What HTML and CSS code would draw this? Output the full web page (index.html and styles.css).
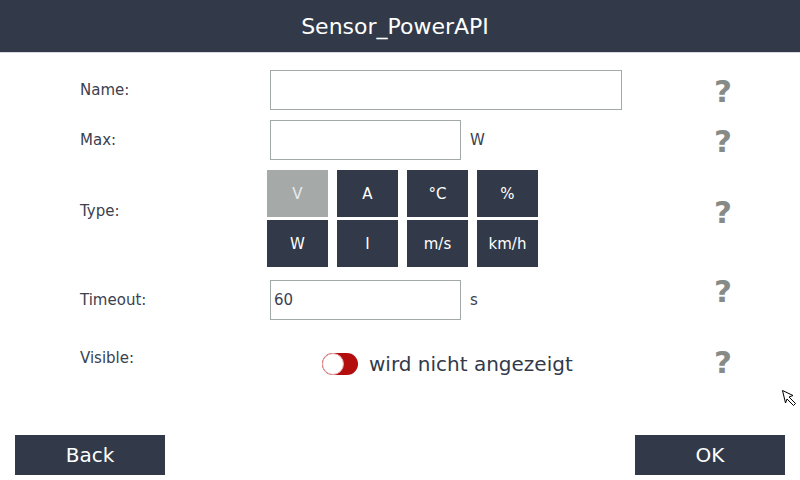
FILE: index.html
```html
<!DOCTYPE html>
<html lang="de">
<head>
  <meta charset="UTF-8">
  <meta name="viewport" content="width=device-width, initial-scale=1.0">
  <title>Sensor_PowerAPI</title>
  <link rel="stylesheet" href="styles.css">
</head>
<body>

  <div class="header">Sensor_PowerAPI</div>

  <div class="form">
    <div class="row row-name">
      <label for="name">Name:</label>
      <div class="field">
        <input type="text" id="name" class="input input-wide">
      </div>
      <span class="help">?</span>
    </div>

    <div class="row row-max">
      <label for="max">Max:</label>
      <div class="field">
        <input type="text" id="max" class="input">
        <span class="unit">W</span>
      </div>
      <span class="help">?</span>
    </div>

    <div class="row row-type">
      <label class="label-type">Type:</label>
      <div class="field">
        <div class="types">
          <button class="type active">V</button>
          <button class="type">A</button>
          <button class="type">°C</button>
          <button class="type">%</button>
          <button class="type">W</button>
          <button class="type">I</button>
          <button class="type">m/s</button>
          <button class="type">km/h</button>
        </div>
      </div>
      <span class="help help-type">?</span>
    </div>

    <div class="row row-timeout">
      <label for="timeout">Timeout:</label>
      <div class="field">
        <input type="text" id="timeout" class="input" value="60">
        <span class="unit">s</span>
      </div>
      <span class="help help-timeout">?</span>
    </div>

    <div class="row row-visible">
      <label class="label-visible">Visible:</label>
      <div class="field field-visible">
        <span class="toggle"><span class="knob"></span></span>
        <span class="toggle-text">wird nicht angezeigt</span>
      </div>
      <span class="help help-visible">?</span>
    </div>
  </div>

  <div class="footer">
    <button class="nav">Back</button>
    <button class="nav">OK</button>
  </div>

  <!-- mouse pointer in the screenshot -->
  <svg class="pointer" width="16" height="18" viewBox="0 0 16 18">
    <path d="M0.5 0.5 L11 5.5 L7 7 L13.5 13.5 L11.5 15.5 L5 9 L3.5 13 Z" fill="#fff" stroke="#000" stroke-width="1"/>
  </svg>

</body>
</html>
```

FILE: styles.css
```css
body {
  margin: 0;
  width: 800px;
  height: 480px;
  display: flex;
  flex-direction: column;
  background: #fff;
  font-family: "DejaVu Sans", sans-serif;
  color: #3b4151;
  overflow: hidden;
  position: relative;
}

.header {
  height: 52px;
  flex-shrink: 0;
  display: flex;
  align-items: center;
  justify-content: center;
  padding-right: 10px;
  background-color: #323a4a;
  border-bottom: 1px solid #d6d9de;
  color: #fff;
  font-size: 22px;
}

.form {
  padding: 17px 0 0 80px;
}

.row {
  display: grid;
  grid-template-columns: 190px 444px 30px;
  grid-template-rows: 40px;
  align-items: center;
  height: 40px;
  margin-bottom: 10px;
}

label {
  font-size: 15px;
}

.field {
  display: flex;
  align-items: center;
}

.input {
  box-sizing: border-box;
  width: 191px;
  height: 40px;
  margin: 0;
  padding: 0 3px;
  border: 1px solid #a3a9a6;
  border-radius: 0;
  font-family: "DejaVu Sans", sans-serif;
  font-size: 15px;
  color: #3b4151;
  outline: none;
}

.input-wide {
  width: 352px;
}

.unit {
  margin-left: 9px;
  font-size: 15px;
}

.help {
  font-size: 31px;
  font-weight: bold;
  color: #868b88;
  line-height: 40px;
  transform: translateY(1px);
}

.row-type {
  height: 97px;
  grid-template-rows: 97px;
  margin-bottom: 13px;
}

.label-type {
  margin-bottom: 16px;
}

.help-type {
  transform: translateY(-7px);
}

.types {
  display: grid;
  grid-template-columns: repeat(4, 61px);
  grid-auto-rows: 47px;
  column-gap: 9px;
  row-gap: 3px;
  margin-left: -3px;
}

.type {
  border: none;
  margin: 0;
  padding: 0;
  background-color: #323a4a;
  color: #fff;
  font-family: "DejaVu Sans", sans-serif;
  font-size: 15px;
}

.type.active {
  background-color: #a5aaa8;
  color: #e8eaea;
}

.help-timeout {
  transform: translateY(-9px);
}

.row-visible {
  margin-top: 24px;
}

.label-visible {
  margin-bottom: 12px;
}

.help-visible {
  transform: translateY(-2px);
}

.field-visible {
  padding-left: 52px;
}

.toggle {
  width: 36px;
  height: 22px;
  border-radius: 11px;
  background-color: #b30d0d;
  position: relative;
}

.knob {
  position: absolute;
  left: 0;
  top: 0;
  width: 20px;
  height: 20px;
  border-radius: 50%;
  background: #fff;
  border: 1px solid #e6a3a3;
}

.toggle-text {
  margin-left: 11px;
  font-size: 20px;
  color: #323a4a;
}

.footer {
  margin-top: auto;
  display: flex;
  justify-content: space-between;
  padding: 0 15px 5px;
}

.nav {
  width: 150px;
  height: 40px;
  border: none;
  margin: 0;
  background-color: #323a4a;
  color: #fff;
  font-family: "DejaVu Sans", sans-serif;
  font-size: 20px;
}

.pointer {
  position: absolute;
  left: 782px;
  top: 390px;
}
```
